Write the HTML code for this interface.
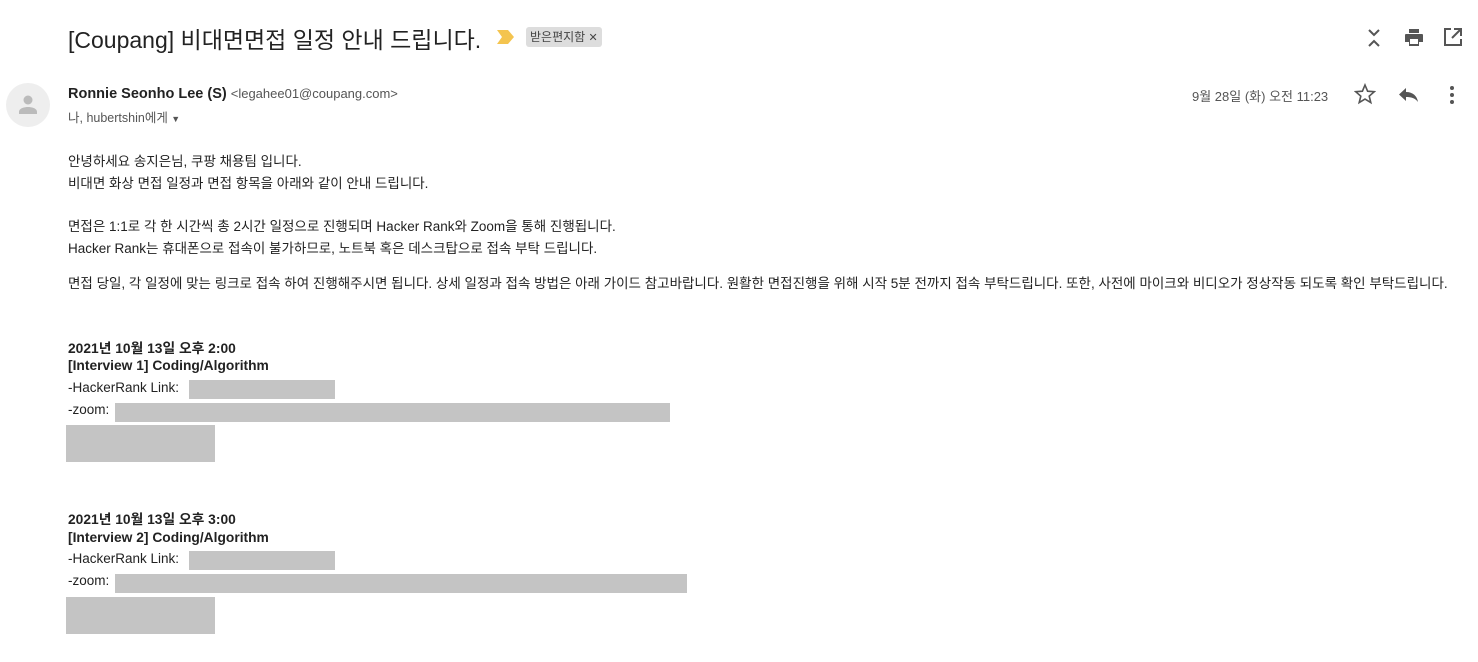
<!DOCTYPE html>
<html><head><meta charset="utf-8"><style>
body{margin:0;width:1478px;height:662px;background:#fff;font-family:"Liberation Sans","Noto Sans CJK KR",sans-serif;color:#222;position:relative;overflow:hidden}
.a{position:absolute;white-space:nowrap}
.t{font-size:13.5px}
.g{position:absolute;background:#c4c4c4}
b{font-weight:bold;font-size:13.8px}
</style></head><body>
<div class="a" style="left:68px;top:21px;font-size:23px;color:#222">[Coupang] 비대면면접 일정 안내 드립니다.</div>
<svg class="a" style="left:497px;top:30px" width="18" height="14"><path d="M0 0H11L17 7L11 14H0L5 7Z" fill="#f4c44f"/></svg>
<div class="a" style="left:526px;top:27px;background:#ddd;border-radius:3px;padding:1px 4px;font-size:12px;color:#444;height:18px;line-height:18px">받은편지함 <span style="font-size:11px">✕</span></div>
<svg class="a" style="left:1365px;top:27px" width="18" height="22" fill="none" stroke="#555" stroke-width="2"><path d="M4 3L9 8L14 3M4 19L9 14L14 19"/></svg>
<svg class="a" style="left:1403px;top:26px" width="22" height="22"><path d="M6 3h10v4H6z M3 8h16a1 1 0 0 1 1 1v7h-4v4H6v-4H2V9a1 1 0 0 1 1-1z" fill="#555"/><rect x="7" y="13" width="8" height="5" fill="#fff"/></svg>
<svg class="a" style="left:1443px;top:27px" width="20" height="20" fill="none" stroke="#555" stroke-width="2"><path d="M8 2H2V18H18V12M11 2H18V9M18 2L9 11"/></svg>
<svg class="a" style="left:6px;top:83px" width="44" height="44"><circle cx="22" cy="22" r="22" fill="#eee"/><circle cx="22" cy="17" r="4.5" fill="#bbb"/><path d="M13 29c0-4 6-5 9-5s9 1 9 5v2H13z" fill="#bbb"/></svg>
<div class="a" style="left:68px;top:86px;font-size:14.5px"><b style="font-size:14.5px">Ronnie Seonho Lee (S)</b> <span style="font-size:13px;color:#555">&lt;legahee01@coupang.com&gt;</span></div>
<div class="a" style="left:68px;top:107px;font-size:12.5px;color:#555">나, hubertshin에게 <span style="font-size:9px">▼</span></div>
<div class="a" style="left:1192px;top:86px;font-size:13px;color:#555">9월 28일 (화) 오전 11:23</div>
<svg class="a" style="left:1354px;top:83px" width="22" height="22"><path d="M11 2l2.6 6.2 6.7.5-5.1 4.4 1.6 6.5L11 16.1 5.2 19.6l1.6-6.5L1.7 8.7l6.7-.5z" fill="none" stroke="#555" stroke-width="1.6"/></svg>
<svg class="a" style="left:1398px;top:85px" width="22" height="18"><path d="M8 3L1 9.5L8 16V12C13 12 17 13 20 17C19 11 15 7 8 7Z" fill="#555"/></svg>
<svg class="a" style="left:1448px;top:84px" width="8" height="22" fill="#555"><circle cx="4" cy="4" r="2"/><circle cx="4" cy="11" r="2"/><circle cx="4" cy="18" r="2"/></svg>
<div class="a t" style="left:68px;top:150px">안녕하세요 송지은님, 쿠팡 채용팀 입니다.</div>
<div class="a t" style="left:68px;top:172px">비대면 화상 면접 일정과 면접 항목을 아래와 같이 안내 드립니다.</div>
<div class="a t" style="left:68px;top:215px">면접은 1:1로 각 한 시간씩 총 2시간 일정으로 진행되며 Hacker Rank와 Zoom을 통해 진행됩니다.</div>
<div class="a t" style="left:68px;top:237px">Hacker Rank는 휴대폰으로 접속이 불가하므로, 노트북 혹은 데스크탑으로 접속 부탁 드립니다.</div>
<div class="a t" style="left:68px;top:272px">면접 당일, 각 일정에 맞는 링크로 접속 하여 진행해주시면 됩니다. 상세 일정과 접속 방법은 아래 가이드 참고바랍니다. 원활한 면접진행을 위해 시작 5분 전까지 접속 부탁드립니다. 또한, 사전에 마이크와 비디오가 정상작동 되도록 확인 부탁드립니다.</div>
<div class="a t" style="left:68px;top:337px"><b>2021년 10월 13일 오후 2:00</b></div>
<div class="a t" style="left:68px;top:358px"><b>[Interview 1] Coding/Algorithm</b></div>
<div class="a t" style="left:68px;top:380px">-HackerRank Link:</div>
<div class="a t" style="left:68px;top:402px">-zoom:</div>
<div class="g" style="left:189px;top:380px;width:146px;height:19px"></div>
<div class="g" style="left:115px;top:403px;width:555px;height:19px"></div>
<div class="g" style="left:66px;top:425px;width:149px;height:37px"></div>
<div class="a t" style="left:68px;top:508px"><b>2021년 10월 13일 오후 3:00</b></div>
<div class="a t" style="left:68px;top:530px"><b>[Interview 2] Coding/Algorithm</b></div>
<div class="a t" style="left:68px;top:551px">-HackerRank Link:</div>
<div class="a t" style="left:68px;top:573px">-zoom:</div>
<div class="g" style="left:189px;top:551px;width:146px;height:19px"></div>
<div class="g" style="left:115px;top:574px;width:572px;height:19px"></div>
<div class="g" style="left:66px;top:597px;width:149px;height:37px"></div>
</body></html>
